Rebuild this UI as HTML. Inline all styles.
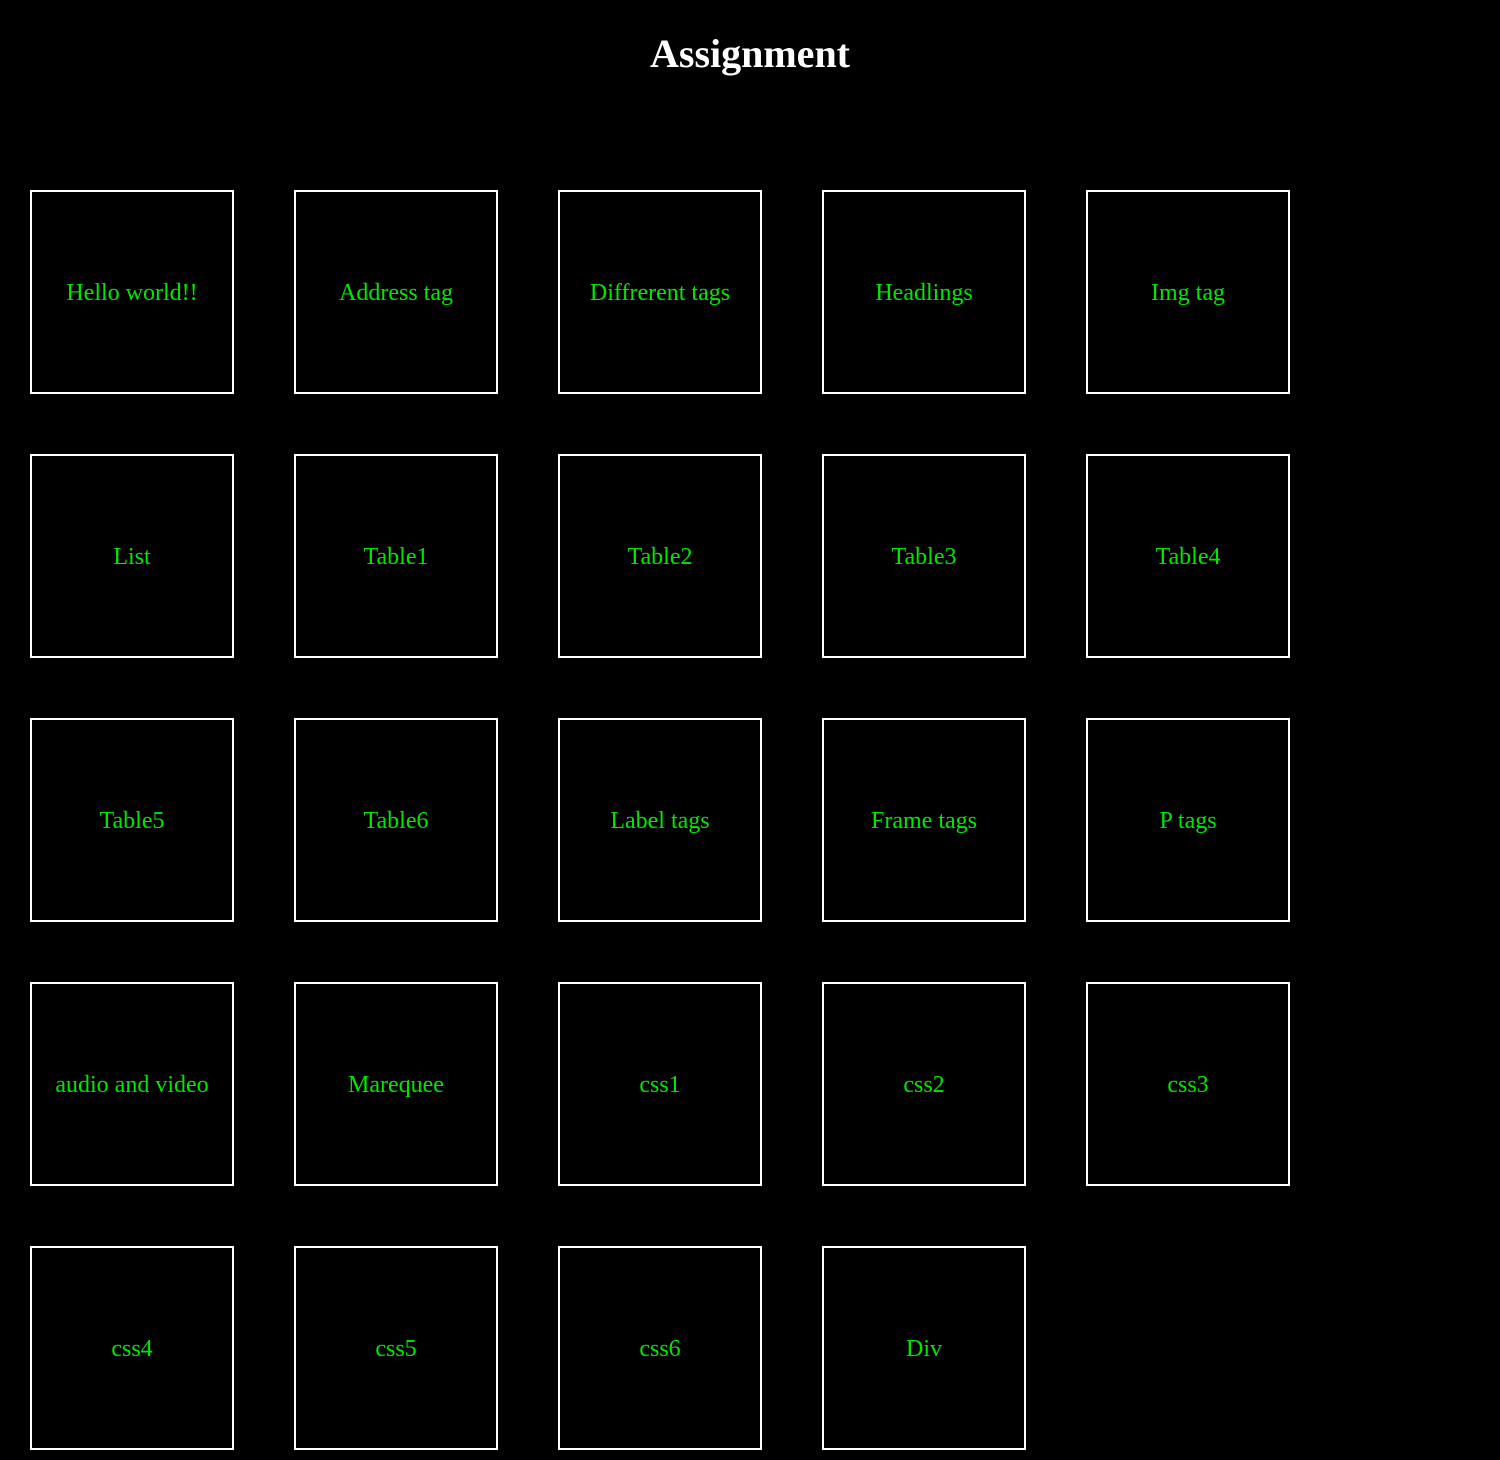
<!DOCTYPE html>
<html><head><style>
html,body{margin:0;background:#000;width:1500px;height:1460px;overflow:hidden}
h1{position:absolute;left:0;width:1500px;top:30px;margin:0;text-align:center;color:#fff;font:bold 40px "Liberation Serif",serif;line-height:48px}
.b{position:absolute;width:200px;height:198px;padding-top:2px;border:2px solid #fff;display:flex;align-items:center;justify-content:center;color:rgb(0,232,0);font:24px "Liberation Serif",serif;text-align:center}
</style></head><body>
<h1>Assignment</h1>
<div class="b" style="left:30px;top:190px">Hello world!!</div>
<div class="b" style="left:294px;top:190px">Address tag</div>
<div class="b" style="left:558px;top:190px">Diffrerent tags</div>
<div class="b" style="left:822px;top:190px">Headlings</div>
<div class="b" style="left:1086px;top:190px">Img tag</div>
<div class="b" style="left:30px;top:454px">List</div>
<div class="b" style="left:294px;top:454px">Table1</div>
<div class="b" style="left:558px;top:454px">Table2</div>
<div class="b" style="left:822px;top:454px">Table3</div>
<div class="b" style="left:1086px;top:454px">Table4</div>
<div class="b" style="left:30px;top:718px">Table5</div>
<div class="b" style="left:294px;top:718px">Table6</div>
<div class="b" style="left:558px;top:718px">Label tags</div>
<div class="b" style="left:822px;top:718px">Frame tags</div>
<div class="b" style="left:1086px;top:718px">P tags</div>
<div class="b" style="left:30px;top:982px">audio and video</div>
<div class="b" style="left:294px;top:982px">Marequee</div>
<div class="b" style="left:558px;top:982px">css1</div>
<div class="b" style="left:822px;top:982px">css2</div>
<div class="b" style="left:1086px;top:982px">css3</div>
<div class="b" style="left:30px;top:1246px">css4</div>
<div class="b" style="left:294px;top:1246px">css5</div>
<div class="b" style="left:558px;top:1246px">css6</div>
<div class="b" style="left:822px;top:1246px">Div</div>
</body></html>
